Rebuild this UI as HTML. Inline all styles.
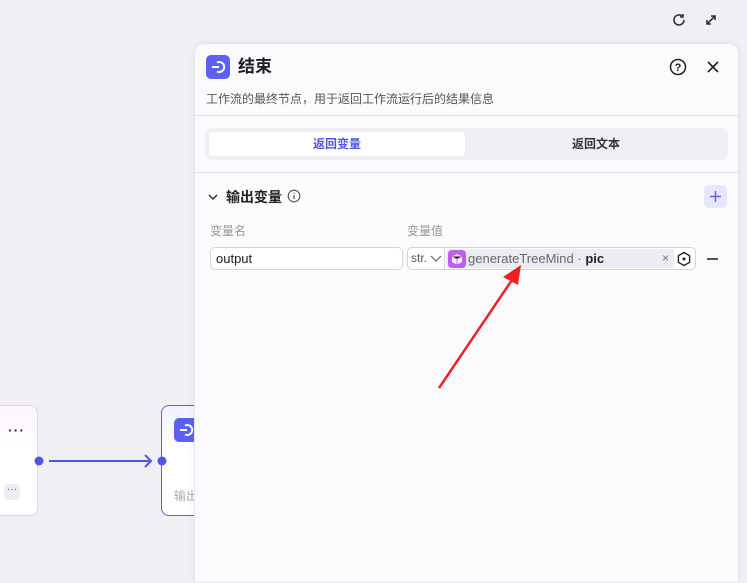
<!DOCTYPE html>
<html><head><meta charset="utf-8"><style>
*{box-sizing:border-box;margin:0;padding:0}
body{width:747px;height:575px;overflow:hidden;background:#f0f0f4;font-family:"Liberation Sans","Noto Sans CJK SC",sans-serif;position:relative;color:#1c1d23}
.abs{position:absolute}
.panel{left:194px;top:43px;width:545px;height:540px;background:#fbfbfd;border:1px solid #e6e6ee;border-radius:10px 10px 0 0;box-shadow:0 0 8px rgba(0,0,0,.05)}
</style></head><body>
<svg class="abs" style="left:671px;top:12px" width="16" height="16" viewBox="0 0 16 16"><path d="M13 8a5 5 0 1 1-1.5-3.6" fill="none" stroke="#333" stroke-width="1.6"/><path d="M12 2v3h-3" fill="none" stroke="#333" stroke-width="1.6"/></svg>
<svg class="abs" style="left:704px;top:13px" width="14" height="14" viewBox="0 0 14 14"><path d="M3 11L11 3M7 3h4v4M3 7v4h4" fill="none" stroke="#333" stroke-width="1.6"/></svg>
<div class="abs" style="left:-10px;top:405px;width:48px;height:111px;background:linear-gradient(#fcf6fd,#fff 40%);border:1px solid #d9d9e3;border-radius:8px"></div>
<div class="abs" style="left:8px;top:422px;font-size:14px;letter-spacing:1px;color:#333;font-weight:bold">···</div>
<div class="abs" style="left:4px;top:484px;width:16px;height:16px;background:#ececf3;border-radius:4px;font-size:10px;text-align:center;color:#555">···</div>
<svg class="abs" style="left:30px;top:450px" width="170" height="24"><circle cx="9" cy="11" r="4.5" fill="#4e56e6"/><line x1="19" y1="11" x2="121" y2="11" stroke="#4e56e6" stroke-width="2"/><path d="M115 5l6 6-6 6" fill="none" stroke="#4e56e6" stroke-width="2"/></svg>
<div class="abs" style="left:161px;top:405px;width:50px;height:111px;background:linear-gradient(#f1f2ff,#fff 40%);border:1px solid #5b5fe8;border-radius:8px"></div>
<div class="abs" style="left:174px;top:418px;width:24px;height:24px;background:#5b61f4;border-radius:5px"></div>
<svg class="abs" style="left:174px;top:418px" width="24" height="24"><path d="M6 12h7" stroke="#fff" stroke-width="2"/><path d="M11 7.5a5 5 0 1 1 0 9" fill="none" stroke="#fff" stroke-width="2"/></svg>
<div class="abs" style="left:174px;top:487px;font-size:12px;color:#aaa">输出</div>
<svg class="abs" style="left:157px;top:455px" width="12" height="12"><circle cx="5" cy="6" r="4.5" fill="#4e56e6"/></svg>
<div class="abs panel"></div>
<div class="abs" style="left:206px;top:55px;width:24px;height:24px;background:#5b61f4;border-radius:5px"></div>
<svg class="abs" style="left:206px;top:55px" width="24" height="24"><path d="M6 12h7" stroke="#fff" stroke-width="2"/><path d="M11 7.5a5 5 0 1 1 0 9" fill="none" stroke="#fff" stroke-width="2"/></svg>
<div class="abs" style="left:238px;top:55px;font-size:17px;font-weight:bold;line-height:24px">结束</div>
<svg class="abs" style="left:669px;top:58px" width="18" height="18"><circle cx="9" cy="9" r="7.5" fill="none" stroke="#222" stroke-width="1.5"/><text x="9" y="13" font-size="11" text-anchor="middle" font-family="Liberation Sans" fill="#222" font-weight="bold">?</text></svg>
<svg class="abs" style="left:706px;top:60px" width="14" height="14"><path d="M2 2l10 10M12 2L2 12" stroke="#222" stroke-width="1.6"/></svg>
<div class="abs" style="left:206px;top:90px;font-size:12px;color:#555">工作流的最终节点，用于返回工作流运行后的结果信息</div>
<div class="abs" style="left:195px;top:115px;width:544px;height:1px;background:#dcdce6"></div>
<div class="abs" style="left:205px;top:128px;width:523px;height:32px;background:#f0f0f4;border-radius:6px"></div>
<div class="abs" style="left:209px;top:132px;width:256px;height:24px;background:#fff;border-radius:5px;text-align:center;font-size:12px;line-height:24px;color:#4e56e6;font-weight:bold">返回变量</div>
<div class="abs" style="left:465px;top:132px;width:262px;height:24px;text-align:center;font-size:12px;line-height:24px;color:#333;font-weight:bold">返回文本</div>
<div class="abs" style="left:195px;top:172px;width:544px;height:1px;background:#dcdce6"></div>
<svg class="abs" style="left:207px;top:191px" width="12" height="12"><path d="M2 4l4 4 4-4" fill="none" stroke="#333" stroke-width="1.5"/></svg>
<div class="abs" style="left:226px;top:187px;font-size:14px;font-weight:bold;color:#222">输出变量</div>
<svg class="abs" style="left:287px;top:189px" width="14" height="14"><circle cx="7" cy="7" r="5.8" fill="none" stroke="#555" stroke-width="1.1"/><path d="M7 6v4M7 3.8v1" stroke="#555" stroke-width="1.2"/></svg>
<div class="abs" style="left:704px;top:185px;width:23px;height:23px;background:#e5e6fc;border-radius:5px"></div>
<svg class="abs" style="left:704px;top:185px" width="23" height="23"><path d="M11.5 6v11M6 11.5h11" stroke="#5b61f4" stroke-width="1.5"/></svg>
<div class="abs" style="left:210px;top:222px;font-size:12px;color:#999">变量名</div>
<div class="abs" style="left:407px;top:222px;font-size:12px;color:#999">变量值</div>
<div class="abs" style="left:210px;top:247px;width:193px;height:23px;background:#fff;border:1px solid #d4d4de;border-radius:5px;font-size:13px;line-height:21px;padding-left:5px;color:#222">output</div>
<div class="abs" style="left:407px;top:247px;width:289px;height:23px;background:#fff;border:1px solid #d4d4de;border-radius:5px"></div>
<div class="abs" style="left:411px;top:251px;font-size:12px;color:#555">str.</div>
<svg class="abs" style="left:430px;top:254px" width="12" height="10"><path d="M1 2l5 5 5-5" fill="none" stroke="#666" stroke-width="1.2"/></svg>
<div class="abs" style="left:444px;top:248px;width:1px;height:21px;background:#d4d4de"></div>
<div class="abs" style="left:446px;top:249px;width:228px;height:19px;background:#ececf5;border-radius:3px"></div>
<div class="abs" style="left:448px;top:250px;width:18px;height:18px;background:#c05cf5;border-radius:4px"></div>
<svg class="abs" style="left:448px;top:250px" width="18" height="18"><path d="M9 4l5 2.5v5.5L9 14.5 4 12V6.5z" fill="#fff"/><path d="M4 6.5L9 9l5-2.5M9 9v5.5" stroke="#c05cf5" stroke-width="1"/></svg>
<div class="abs" style="left:468px;top:251px;font-size:13px;color:#666">generateTreeMind · <b style="color:#222">pic</b></div>
<div class="abs" style="left:662px;top:251px;font-size:12px;color:#777">×</div>
<svg class="abs" style="left:676px;top:251px" width="16" height="16"><path d="M8 1.5l5.6 3.2v6.6L8 14.5 2.4 11.3V4.7z" fill="none" stroke="#222" stroke-width="1.4" stroke-linejoin="round"/><circle cx="8" cy="8" r="1.5" fill="#222"/></svg>
<div class="abs" style="left:707px;top:258px;width:11px;height:1.5px;background:#555"></div>
<svg class="abs" style="left:430px;top:255px" width="100" height="140"><path d="M9 133L84 22" stroke="#f02020" stroke-width="2.5"/><path d="M91 10L73 22l15 8z" fill="#f02020"/></svg>
</body></html>
